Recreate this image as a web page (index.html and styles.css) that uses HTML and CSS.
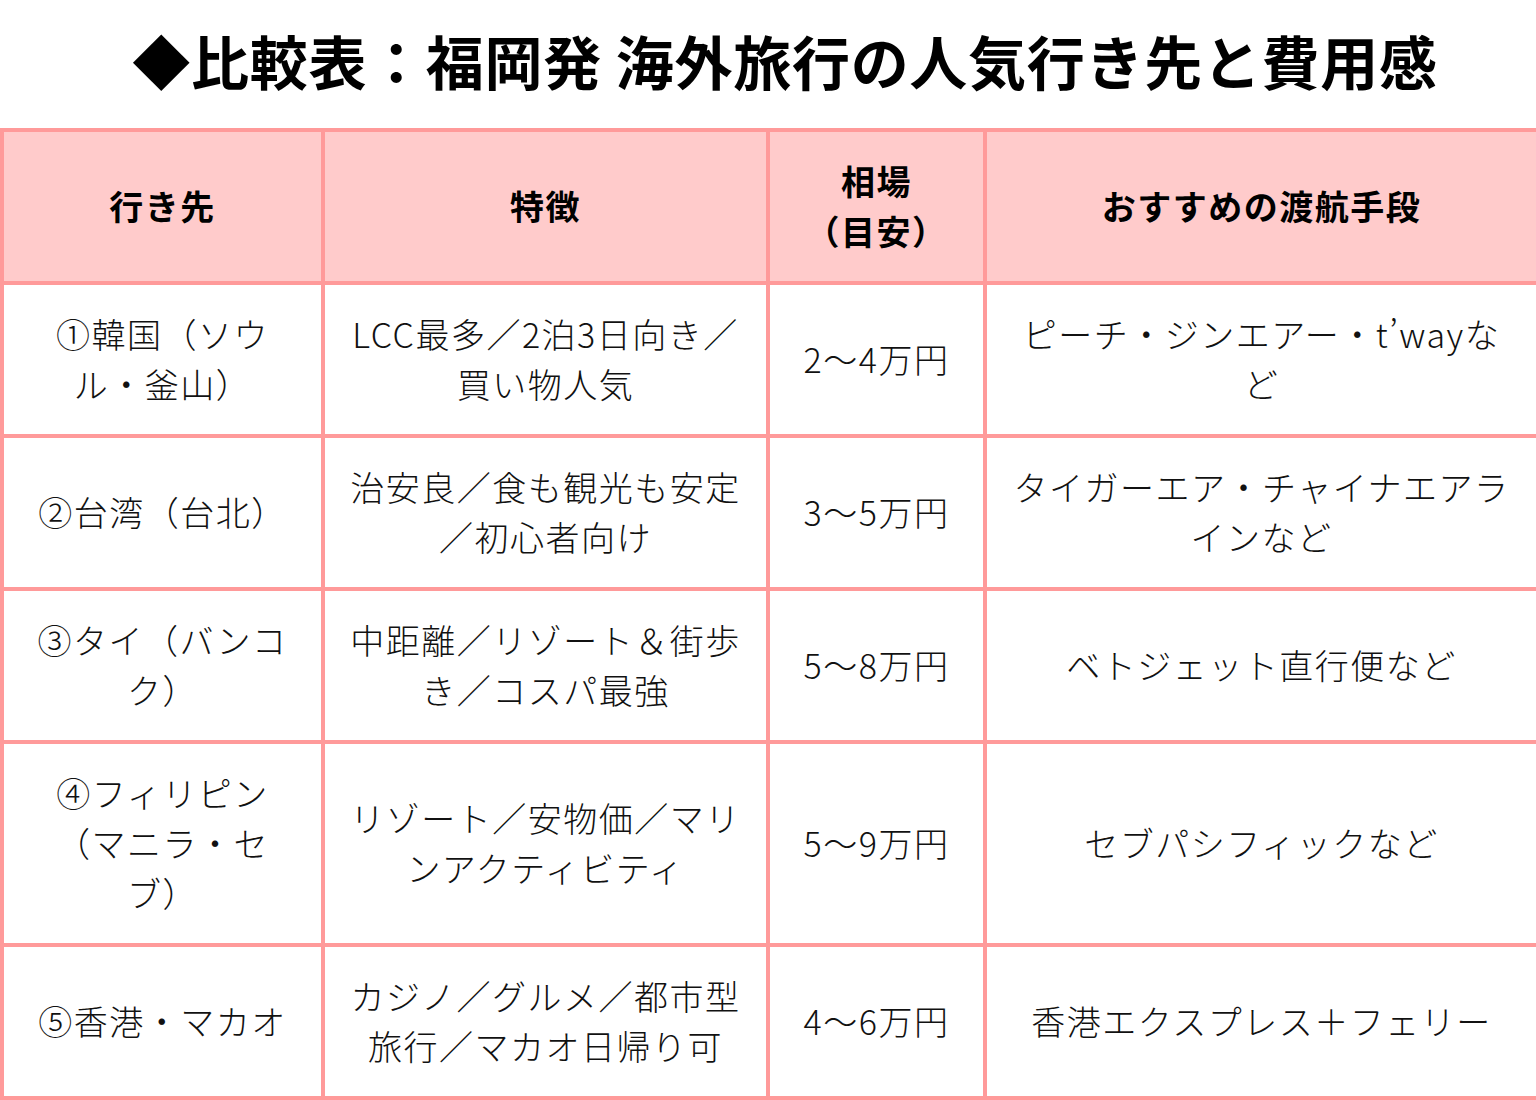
FILE: index.html
```html
<!DOCTYPE html>
<html lang="ja">
<head>
<meta charset="utf-8">
<link rel="stylesheet" href="styles.css">
</head>
<body>
<h1 class="title">◆比較表：福岡発 海外旅行の人気行き先と費用感</h1>
<table class="cmp">
  <colgroup>
    <col class="c1"><col class="c2"><col class="c3"><col class="c4">
  </colgroup>
  <thead>
    <tr><th>行き先</th><th>特徴</th><th>相場<br>（目安）</th><th>おすすめの渡航手段</th></tr>
  </thead>
  <tbody>
    <tr><td>①韓国（ソウ<br>ル・釜山）</td><td>LCC最多／2泊3日向き／<br>買い物人気</td><td>2〜4万円</td><td>ピーチ・ジンエアー・t’wayな<br>ど</td></tr>
    <tr><td>②台湾（台北）</td><td>治安良／食も観光も安定<br>／初心者向け</td><td>3〜5万円</td><td>タイガーエア・チャイナエアラ<br>インなど</td></tr>
    <tr><td>③タイ（バンコ<br>ク）</td><td>中距離／リゾート＆街歩<br>き／コスパ最強</td><td>5〜8万円</td><td>ベトジェット直行便など</td></tr>
    <tr><td>④フィリピン<br>（マニラ・セ<br>ブ）</td><td>リゾート／安物価／マリ<br>ンアクティビティ</td><td>5〜9万円</td><td>セブパシフィックなど</td></tr>
    <tr><td>⑤香港・マカオ</td><td>カジノ／グルメ／都市型<br>旅行／マカオ日帰り可</td><td>4〜6万円</td><td>香港エクスプレス＋フェリー</td></tr>
  </tbody>
</table>
</body>
</html>
```

FILE: styles.css
```css
html, body {
  margin: 0;
  padding: 0;
  background: #ffffff;
  width: 1536px;
}
body {
  font-family: "Noto Sans CJK JP", "Noto Sans", sans-serif;
  color: #111111;
}
.title {
  margin: 0;
  height: 128px;
  line-height: 120px;
  text-align: center;
  font-size: 58px;
  font-weight: 700;
  letter-spacing: 0.7px;
  color: #000000;
  padding-left: 34px;
  box-sizing: border-box;
  white-space: nowrap;
}
.cmp {
  width: 1536px;
  border-collapse: collapse;
  table-layout: fixed;
}
.c1 { width: 321px; }
.c2 { width: 445px; }
.c3 { width: 217px; }
.c4 { width: 553px; }
.cmp th, .cmp td {
  border: 4px solid #ff9a9a;
  text-align: center;
  vertical-align: middle;
  font-size: 34px;
  line-height: 50px;
  letter-spacing: 1.5px;
  padding: 24px 6px 25px;
  white-space: nowrap;
}
.cmp th {
  background: #ffcbcb;
  font-weight: 700;
  color: #000000;
}
.cmp td {
  font-weight: 300;
}
```
